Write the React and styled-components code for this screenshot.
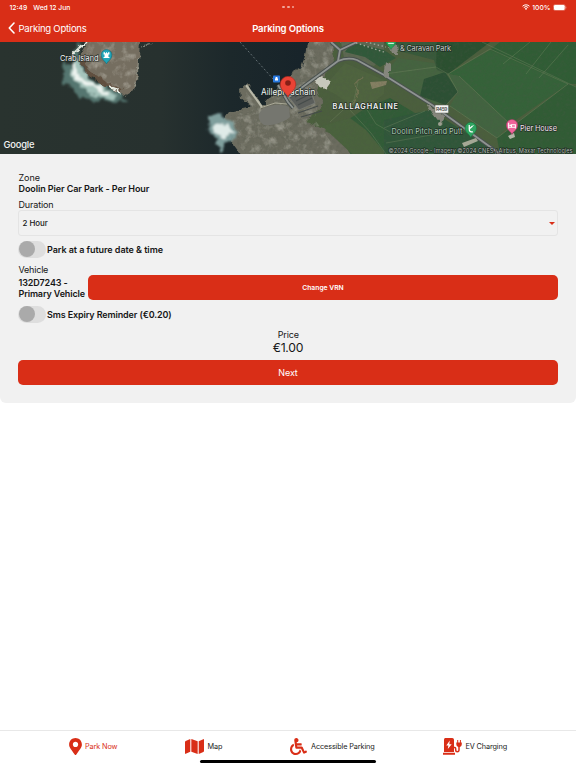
import React, { useState } from "react";
import styled, { createGlobalStyle } from "styled-components";
import { FaMap, FaWheelchair, FaMapMarkerAlt } from "react-icons/fa";

const GlobalStyle = createGlobalStyle`
  * {
    box-sizing: border-box;
  }
  body {
    margin: 0;
    background: #fff;
    color: #161616;
    font-family: Inter, "Liberation Sans", sans-serif;
  }
  button {
    font-family: inherit;
    border: 0;
    padding: 0;
    cursor: pointer;
  }
`;

const Halo = ({ x, y, width, size = 7.5, weight = 400, fill = "#f2f2f2", children }) => (
  <text
    x={x}
    y={y}
    textLength={width}
    fontSize={size}
    fontWeight={weight}
    fill={fill}
    stroke="#1d2722"
    strokeWidth="1.5"
    strokeOpacity="0.8"
    strokeLinejoin="round"
    paintOrder="stroke"
  >
    {children}
  </text>
);

const Pin = ({ x, y, scale = 1, fill, edge, children }) => (
  <g transform={`translate(${x} ${y}) scale(${scale})`}>
    <path
      d="M0 0C-.9-3-5.5-4.3-5.5-9.2A5.5 5.5 0 0 1 5.5-9.2C5.5-4.3.9-3 0 0Z"
      fill={fill}
      stroke={edge}
      strokeWidth=".5"
    />
    {children}
  </g>
);

const SatelliteMap = () => (
  <svg width="576" height="112" viewBox="0 42 576 112">
    <defs>
      <linearGradient id="sea" x1="0" y1="0" x2="1" y2="0">
        <stop offset="0" stopColor="#29332f" />
        <stop offset=".28" stopColor="#27312f" />
        <stop offset=".4" stopColor="#1c282b" />
        <stop offset=".55" stopColor="#17232a" />
      </linearGradient>
      <filter id="ragged" x="-10%" y="-10%" width="120%" height="120%">
        <feTurbulence type="fractalNoise" baseFrequency=".16" numOctaves="3" seed="4" />
        <feDisplacementMap in="SourceGraphic" scale="6" xChannelSelector="R" yChannelSelector="G" />
        <feGaussianBlur stdDeviation=".4" />
      </filter>
      <filter id="foam" x="-20%" y="-20%" width="140%" height="140%">
        <feTurbulence type="fractalNoise" baseFrequency=".12" numOctaves="4" seed="9" />
        <feDisplacementMap in="SourceGraphic" scale="11" xChannelSelector="R" yChannelSelector="G" />
        <feGaussianBlur stdDeviation="1" />
      </filter>
      <filter id="grain" x="0" y="0" width="100%" height="100%">
        <feTurbulence type="fractalNoise" baseFrequency=".3" numOctaves="4" seed="2" />
        <feColorMatrix values="0 0 0 0 .08  0 0 0 0 .1  0 0 0 0 .07  2.6 0 0 0 -1.1" />
      </filter>
      <filter id="speckle" x="0" y="0" width="100%" height="100%">
        <feTurbulence type="fractalNoise" baseFrequency=".13" numOctaves="4" seed="17" />
        <feColorMatrix values="0 0 0 0 .68  0 0 0 0 .67  0 0 0 0 .6  0 2.4 0 0 -1.1" />
      </filter>
      <clipPath id="rocks">
        <path d="M90 42 84 56 90 72 104 84 122 91 131 87 135 75 137 42ZM309 42 305 62 287 84 270 99 262 110 246 92 245 98 254 109 231 115 228 121 238 130 237 144 246 154 340 154 315 120 317 108 312 92 326 70 330 60 334 42Z" />
      </clipPath>
      <clipPath id="land">
        <path d="M309 42 305 62 287 84 270 99 262 110 246 92 245 98 254 109 231 115 228 121 238 130 237 144 246 154H576V42Z" />
      </clipPath>
    </defs>

    <rect y="42" width="576" height="112" fill="url(#sea)" />

    {/* Crab Island and the surf round it */}
    <g filter="url(#foam)">
      <path d="M82 43C75 48 70 56 71 62C63 62 60 70 63 80C69 89 79 96 90 100L112 102L126 102L118 91L98 83L84 72L78 62Z" fill="#54766f" />
      <path d="M74 60C68 68 72 78 79 84C88 92 98 98 108 99L119 98L106 89L91 80L84 71L79 60Z" fill="#a5c4bc" />
      <path d="M73 63C72 73 80 80 86 82L97 88L107 94" fill="none" stroke="#eef4f0" strokeWidth="4" />
    </g>
    <path filter="url(#ragged)" d="M89 39 82 51 79 59 86 73 104 85 124 95 134 89 138 76 140 39Z" fill="#746e60" />
    <path filter="url(#ragged)" d="M81 60 88 72 104 83 122 91" fill="none" stroke="#57402f" strokeWidth="4" opacity=".65" />
    <path filter="url(#ragged)" d="M87 42 79 48 73 54 72 60M110 87 118 90 121 95" fill="none" stroke="#e6ebe2" strokeWidth="1.8" />
    <path filter="url(#ragged)" d="M134 88 137 73 139 55M142 46 152 43" fill="none" stroke="#9da195" strokeWidth="1" opacity=".7" />

    {/* mainland */}
    <path filter="url(#ragged)" d="M308 38 304 60 301 68 290 74 283 82 270 97 262 106 247 84 240 90 241 98 252 107 229 112 223 120 234 130 233 144 242 156H580V38Z" fill="#6c6c5e" />
    <path d="M332 42 334 60 316 90 324 103 306 122 335 134 352 156H580V40Z" fill="#4c5f3e" filter="url(#ragged)" />
    <path d="M341 42H384V56L374 66 344 58Z" fill="#5d6852" />
    <path d="M352 42 345 52 365 57 380 67 396 58 384 50Z" fill="#31593a" />
    <path d="M345 63 384 80 384 94 366 108 352 106 335 94 323 88Z" fill="#4f643f" />
    <path d="M366 108 390 98 440 128 470 156H352L335 128Z" fill="#315c37" />
    <path d="M322 126 350 118 366 130 386 154H352Z" fill="#4a623d" />
    <path d="M384 120 430 110 500 154H384Z" fill="#30573a" />
    <path d="M384 74 398 58 440 64 458 90 446 105 424 102Z" fill="#456440" />
    <path d="M424 79 445 72 458 92 446 105 420 96Z" fill="#2c5034" />
    <path d="M384 42H490L448 74 437 70 434 60 395 50Z" fill="#38593a" />
    <path d="M437 42H490L448 74 436 68Z" fill="#2b5030" />
    <path d="M490 50 568 84 510 124 459 76 448 74Z" fill="#356239" />
    <path d="M459 76 510 124 497 138 450 106 458 92 448 74Z" fill="#426440" />
    <path d="M490 50 500 42H576V84L568 84Z" fill="#305d35" />
    <path d="M568 84 576 86V154H500L497 138Z" fill="#315c35" />

    <g fill="none" stroke="#7d8e69" strokeWidth=".7" opacity=".5">
      <path d="M490 49 448 74 458 92 446 105M459 76 510 124M490 49 568 84 497 138 450 106M482 42 576 87M530 42 503 64M551 42 526 74M568 45 539 78M384 74 436 67 448 74" />
      <path d="M366 108 376 124 390 132M350 110 371 133 386 154M384 128 425 111M386 143 448 132M358 82 354 100 330 122" />
    </g>
    <path filter="url(#ragged)" d="M362 76 355 84 358 96 351 104" fill="none" stroke="#857b5b" strokeWidth="1.6" opacity=".6" />
    <path d="M370 82 387 81 386 85 372 89Z" fill="#96886f" opacity=".75" />

    <rect y="42" width="576" height="112" filter="url(#grain)" clipPath="url(#land)" opacity=".22" />
    <rect y="42" width="576" height="112" filter="url(#speckle)" clipPath="url(#rocks)" opacity=".4" />

    {/* harbour */}
    <path d="M261 111C267 104 282 103 289 107L290 117C284 122 274 126 264 125C258 121 257 115 261 111Z" fill="#75766f" />
    <path d="M246 85 262 107" stroke="#b8b8a8" strokeWidth="2.2" />
    <path d="M260 108 275 103 287 104" fill="none" stroke="#aaa997" strokeWidth="1" />
    <path d="M288 96 302 86 311 92 315 103 299 110Z" fill="#5b5e5b" stroke="#7d807a" strokeWidth=".7" />
    <path d="M295 97 306 90M296 101 310 94M298 105 312 98M298 113 318 106M301 117 322 111" stroke="#454b4a" strokeWidth="1.2" />
    <path filter="url(#ragged)" d="M314 80 322 75 331 83 326 90 319 86Z" fill="#c6c7bc" />

    {/* surf south of the pier */}
    <g filter="url(#foam)">
      <path d="M208 116 217 114 232 122 239 131 235 139 224 143 223 150 216 146 217 138 209 133Z" fill="#7f9f9d" />
      <path d="M213 123 226 125 235 131 227 138 214 133Z" fill="#dfebe8" />
    </g>

    {/* roads */}
    <g fill="none" strokeLinejoin="round">
      <path d="M278 85 288 102 293 108M289 97 338 61 340 50 331 42M338 61Q348 57 357 60L384 75 432 105 500 154M340 50 357 42" stroke="#4a514f" strokeWidth="3.8" />
      <path d="M278 85 288 102 293 108M289 97 338 61 340 50 331 42M338 61Q348 57 357 60L384 75 432 105 500 154M340 50 357 42" stroke="#8f9491" strokeWidth="1.8" />
      <path d="M240 42 274 80" stroke="#758084" strokeWidth=".8" strokeDasharray="2 2" />
    </g>
    <path d="M356 43 384 52M366 42 386 47" stroke="#a3a99c" strokeWidth="1.3" strokeDasharray="1.5 2.5" />
    <path filter="url(#ragged)" d="M386 62 390 66 390 77 384 78ZM390 46 398 44 399 54 392 54ZM426 104 436 108 446 116 441 124 433 114Z" fill="#85867b" />
    <path d="M462 143 476 138 478 141 464 147Z" fill="#a5a895" />
    <circle cx="440" cy="124" r="2" fill="#9da091" />
    <path d="M508 136 514 133 515 137 510 139Z" fill="#b3b5a7" />

    {/* places */}
    <Halo x="60" y="60.5" width="38.5">Crab Island</Halo>
    <Pin x={106.5} y={64} scale={0.98} fill="#20a4b8" edge="#0c6474">
      <path d="M-3-12h1.500v1h1v-1h1v1h1v-1h1.500v2.300h-1v2.500h1v1.200h-6v-1.200h1v-2.500h-1Z" fill="#fff" />
    </Pin>
    <rect x="273" y="75.5" width="7" height="7" rx=".8" fill="#2878df" />
    <path d="M275 80.500v-2h.6v-1.500h1.800v1.500h.6v2Z" fill="#fff" />
    <Halo x="261" y="95" width="54.5" size={8.3}>Ailleproachain</Halo>
    <Pin x={288} y={97} scale={1.4} fill="#ea4335" edge="#b72c23">
      <circle cy="-10" r="2" fill="#861e16" />
    </Pin>
    <Halo x="332.5" y="109" width="65.5" size={7.3} weight={600}>BALLAGHALINE</Halo>
    <Halo x="400" y="51" width="51" fill="#c3ccc4">&amp; Caravan Park</Halo>
    <Pin x={391} y={49.5} scale={0.95} fill="#2ba65a" edge="#14713a">
      <path d="M-3-7h6v1h-6z" fill="#fff" />
    </Pin>
    <rect x="435" y="105" width="13.5" height="8" rx=".8" fill="#f3f3f0" stroke="#5b5e59" strokeWidth=".5" />
    <text x="436" y="111.1" textLength="11.5" fontSize="5" fontWeight="500" fill="#3b3d3b">R459</text>
    <Halo x="391.5" y="133.5" width="71" fill="#a9cdb4">Doolin Pitch and Putt</Halo>
    <Pin x={470.8} y={137.5} scale={1.04} fill="#2fa561" edge="#14713a">
      <path d="M-1.500-12v3.500q0 3 2 3.200h1.500M-1.300-8.500l3-2.500M2.400-12v.5" fill="none" stroke="#fff" strokeWidth="1.2" />
    </Pin>
    <Pin x={512} y={134.5} scale={1.02} fill="#ef6299" edge="#b2376a">
      <path d="M-3.300-11.500v5.500M-3.300-7.200h6.600v1.200M3.300-7.200v-2.300h-3.800v2.300" fill="none" stroke="#fff" strokeWidth="1" />
      <circle cx="-1.8" cy="-9" r=".9" fill="#fff" />
    </Pin>
    <Halo x="520" y="130.5" width="37" fill="#f4e5ec">Pier House</Halo>
    <Halo x="388.5" y="152.8" width="184" size={5.8} fill="#aeb5ae">
      ©2024 Google - Imagery ©2024 CNES / Airbus, Maxar Technologies
    </Halo>
    <text x="3.5" y="148" textLength="31" fontSize="9.4" fontWeight="500" fill="#f5f5f5">
      Google
    </text>
  </svg>
);

const ChargerIcon = () => (
  <svg width="19" height="17" viewBox="0 0 19 17">
    <path
      fillRule="evenodd"
      fill="#d92e17"
      d="M2.200 0H9.200Q11 0 11 1.800V14H1V1.800Q1 0 2.200 0ZM6.800 2.500 3.300 7.600H5.400L4.800 11 8.700 6.200H6.300Z"
    />
    <path fill="#d92e17" d="M0 14.800h12v1.900H0zM13.300 4.500h5.500v1.800q0 2-1.900 2.600h-1.600q-2-.6-2-2.600zM14.200 2h1v2.500h-1zM16.900 2h1v2.500h-1z" />
    <path fill="none" stroke="#d92e17" strokeWidth="1.5" d="M11 9.500h.7q1 0 1 1.200v1.600q0 1.500 1.600 1.500t1.700-1.500V8.500" />
  </svg>
);

const Switch = ({ label, track, top }) => {
  const [on, setOn] = useState(false);

  return (
    <SwitchRow $top={top} onClick={() => setOn(!on)}>
      <Track $on={on}>
        <Thumb />
      </Track>
      <Strong $track={track}>{label}</Strong>
    </SwitchRow>
  );
};

const tabs = [
  { name: "Park Now", icon: <FaMapMarkerAlt size={17} />, iconWidth: 14, width: 117, gap: 3, active: true },
  { name: "Map", icon: <FaMap size={19} />, iconWidth: 19, width: 105, gap: 3.5 },
  { name: "Accessible Parking", icon: <FaWheelchair size={17} />, iconWidth: 17, width: 153, gap: 4 },
  { name: "EV Charging", icon: <ChargerIcon />, iconWidth: 19, width: 100, gap: 3.5 },
];

const App = () => {
  return (
    <>
      <GlobalStyle />
      <Screen>
        <Header>
          <StatusBar>
            <Clock>
              <span>12:49</span>
              <span>Wed 12 Jun</span>
            </Clock>
            <Dots>
              <i />
              <i />
              <i />
            </Dots>
            <Power>
              <svg width="8" height="6" viewBox="0 0 16 12">
                <path d="M1 4.500a10 10 0 0 1 14 0M3.500 7.200a6.400 6.400 0 0 1 9 0" fill="none" stroke="#fff" strokeWidth="2" />
                <path d="M5.600 9.300a3.500 3.500 0 0 1 4.800 0L8 11.800Z" fill="#fff" />
              </svg>
              <span>100%</span>
              <svg width="14" height="7" viewBox="0 0 14 7">
                <rect x=".3" y=".5" width="12" height="6" rx="1.8" fill="none" stroke="#fff" strokeOpacity=".5" strokeWidth=".5" />
                <rect x=".9" y="1.1" width="10.8" height="4.8" rx="1.2" fill="#fff" />
                <path d="M12.900 2.600v1.800" stroke="#fff" strokeOpacity=".6" strokeWidth=".7" />
              </svg>
            </Power>
          </StatusBar>
          <NavBar>
            <Back>
              <svg width="7" height="12" viewBox="0 0 7 12">
                <path d="M6 1 1.300 6 6 11" fill="none" stroke="#fff" strokeWidth="1.6" strokeLinecap="round" strokeLinejoin="round" />
              </svg>
              Parking Options
            </Back>
            <Title>Parking Options</Title>
          </NavBar>
        </Header>

        <MapStrip>
          <SatelliteMap />
        </MapStrip>

        <Panel>
          <Label $track="-.05px">Zone</Label>
          <Strong $track="-.09px">Doolin Pier Car Park - Per Hour</Strong>
          <Label $top={5}>Duration</Label>
          <Select>
            2 Hour
            <Caret />
          </Select>
          <Switch label="Park at a future date & time" track="-.05px" top={4} />
          <Label $top={6} $track="-.2px">Vehicle</Label>
          <VehicleRow>
            <Vrn $track="-.14px">132D7243 - Primary Vehicle</Vrn>
            <Button $small>Change VRN</Button>
          </VehicleRow>
          <Switch label="Sms Expiry Reminder (€0.20)" track="-.12px" top={5} />
          <Price>
            <Label $track="-.15px">Price</Label>
            <Amount>€1.00</Amount>
          </Price>
          <Button>Next</Button>
        </Panel>

        <TabBar>
          {tabs.map((tab) => (
            <Tab key={tab.name} $active={tab.active} $width={tab.width} $gap={tab.gap}>
              <TabIcon $width={tab.iconWidth}>{tab.icon}</TabIcon>
              {tab.name}
            </Tab>
          ))}
        </TabBar>
        <HomeIndicator />
      </Screen>
    </>
  );
};

const Screen = styled.div`
  position: relative;
  display: flex;
  flex-direction: column;
  width: 576px;
  height: 768px;
  overflow: hidden;
  background: #fff;
`;

const Header = styled.header`
  height: 42px;
  background: #d92e17;
  color: #fff;
`;

const StatusBar = styled.div`
  display: grid;
  grid-template-columns: 1fr auto 1fr;
  align-items: center;
  height: 14px;
  padding: 0 9px 0 9.5px;
  font-size: 6.75px;
  font-weight: 500;
`;

const Clock = styled.div`
  display: flex;
  gap: 6px;
`;

const Dots = styled.div`
  display: flex;
  gap: 2px;

  i {
    width: 2.6px;
    height: 2.6px;
    border-radius: 50%;
    background: #f0a69b;
  }
`;

const Power = styled.div`
  display: flex;
  justify-content: flex-end;
  align-items: center;
  gap: 2.5px;
`;

const NavBar = styled.nav`
  display: grid;
  grid-template-columns: 1fr auto 1fr;
  align-items: center;
  height: 28px;
  padding: 0 7.5px;
`;

const Back = styled.div`
  display: flex;
  align-items: center;
  gap: 4px;
  font-size: 9.56px;
  letter-spacing: -0.26px;
`;

const Title = styled.h1`
  margin: 0;
  font-size: 9.56px;
  font-weight: 600;
  letter-spacing: -0.14px;
`;

const MapStrip = styled.div`
  height: 112px;

  svg {
    display: block;
  }
`;

const Panel = styled.main`
  display: flex;
  flex-direction: column;
  height: 249px;
  padding: 18px 18px 0;
  background: #f1f1f1;
  border-radius: 0 0 6px 6px;
`;

const Label = styled.div`
  margin-top: ${({ $top }) => $top || 0}px;
  padding-left: 0.5px;
  font-size: 9px;
  line-height: 11px;
  letter-spacing: ${({ $track }) => $track || "-0.13px"};
`;

const Strong = styled.div`
  padding-left: 0.5px;
  font-size: 9px;
  font-weight: 600;
  line-height: 11px;
  letter-spacing: ${({ $track }) => $track};
`;

const Select = styled.div`
  display: flex;
  justify-content: space-between;
  align-items: center;
  height: 26px;
  padding: 0 2px 0 3.5px;
  border: 1px solid #e4e4e4;
  border-radius: 3px;
  font-size: 7.9px;
  font-weight: 500;
`;

const Caret = styled.span`
  border: 3px solid transparent;
  border-top-color: #d92e17;
  border-bottom: 0;
`;

const SwitchRow = styled.div`
  display: flex;
  align-items: center;
  height: 18px;
  margin-top: ${({ $top }) => $top}px;
  gap: 0.5px;
  cursor: pointer;
`;

const Track = styled.div`
  display: flex;
  align-items: center;
  justify-content: ${({ $on }) => ($on ? "flex-end" : "flex-start")};
  width: 28px;
  height: 17px;
  padding: 1px;
  border-radius: 9px;
  background: #dedede;
`;

const Thumb = styled.div`
  width: 16px;
  height: 16px;
  border-radius: 50%;
  background: #aaa;
`;

const VehicleRow = styled.div`
  display: flex;
  align-items: center;
  height: 25px;
`;

const Vrn = styled(Strong)`
  flex: 0 0 70px;
`;

const Button = styled.button`
  flex: ${({ $small }) => ($small ? "1" : "0 0 25px")};
  height: 25px;
  border-radius: 5px;
  background: #d92e17;
  color: #fff;
  font-size: ${({ $small }) => ($small ? 6.75 : 9)}px;
  font-weight: ${({ $small }) => ($small ? 600 : 400)};
  letter-spacing: ${({ $small }) => ($small ? 0 : "-0.15px")};
`;

const Price = styled.div`
  margin: 6px 0 5px;
  text-align: center;
`;

const Amount = styled.div`
  font-size: 12.2px;
  line-height: 15px;
  letter-spacing: -0.25px;
`;

const TabBar = styled.footer`
  display: flex;
  height: 38px;
  margin-top: auto;
  padding: 0 0 7px 68px;
  border-top: 1px solid #e8e8e8;
`;

const Tab = styled.div`
  display: flex;
  align-items: center;
  gap: ${({ $gap }) => $gap}px;
  width: ${({ $width }) => $width}px;
  font-size: 7.3px;
  letter-spacing: -0.12px;
  color: ${({ $active }) => ($active ? "#d92e17" : "#222")};
`;

const TabIcon = styled.span`
  display: flex;
  justify-content: center;
  flex: 0 0 ${({ $width }) => $width}px;
  min-width: 0;
  color: #d92e17;

  svg {
    flex: none;
  }
`;

// floats over the bottom of the tab bar
const HomeIndicator = styled.div`
  position: absolute;
  left: 200px;
  bottom: 5px;
  width: 176px;
  height: 3px;
  border-radius: 2px;
  background: #000;
`;

export default App;
